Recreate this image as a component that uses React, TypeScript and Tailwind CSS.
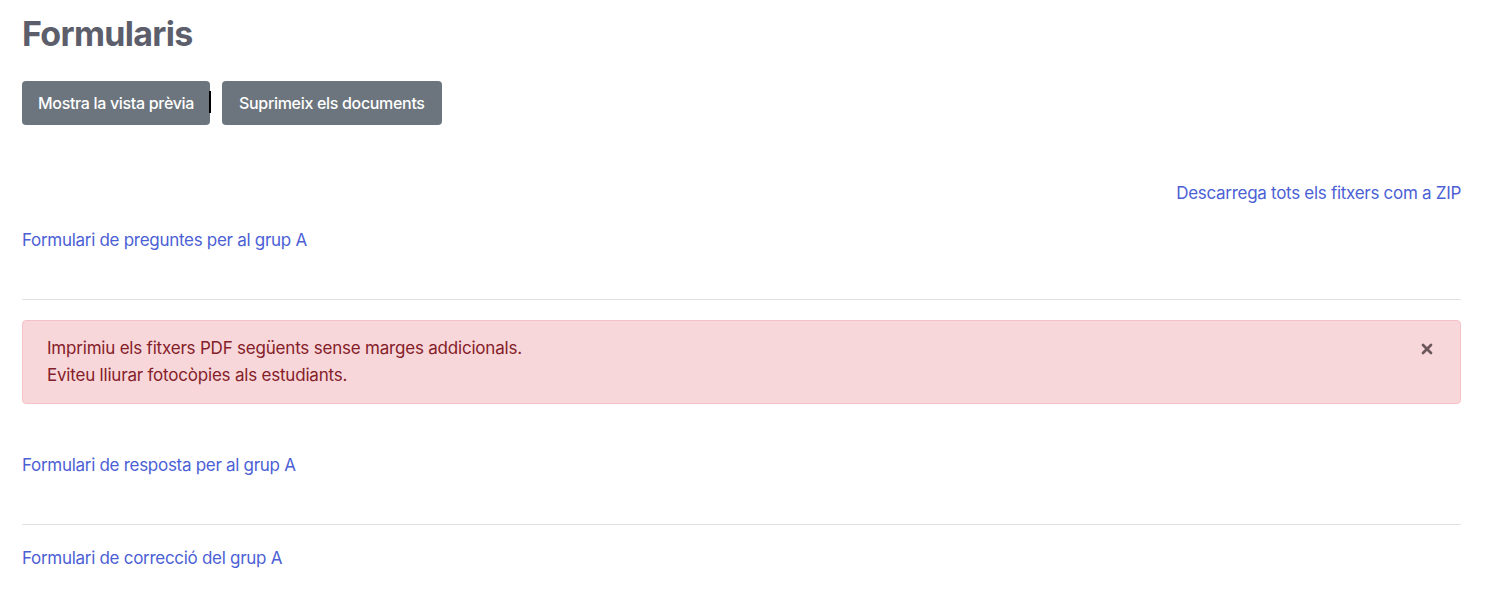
import { X } from "lucide-react";

const link = "text-[#4c5fd5] text-[17px] leading-6 tracking-[-0.017em] hover:underline";

export default function App() {
  return (
    <div className="min-h-screen bg-white font-['Inter',sans-serif] pl-[22px] pr-[36px]">
      <h1 className="pt-[12px] text-[34px] leading-[44px] font-bold tracking-[-0.02em] text-[#5c5e6c]">Formularis</h1>

      <div className="mt-[25px] flex items-center gap-[12px]">
        <button className="relative h-[44px] rounded-[4px] bg-[#6c757d] px-[16px] text-[16px] font-medium tracking-[-0.02em] text-white">
          Mostra la vista prèvia
          <span className="absolute right-[-1px] top-[10px] h-[22px] w-[2px] bg-black" />
        </button>
        <button className="h-[44px] rounded-[4px] bg-[#6c757d] px-[17px] text-[16px] font-medium tracking-[-0.02em] text-white">
          Suprimeix els documents
        </button>
      </div>

      <div className="mt-[56px] flex justify-end">
        <a href="#" className={link}>Descarrega tots els fitxers com a ZIP</a>
      </div>

      <div className="mt-[23px]">
        <a href="#" className={link}>Formulari de preguntes per al grup A</a>
      </div>
      <hr className="mt-[47px] border-[#e2e2e2]" />

      <div className="mt-[20px] flex items-start justify-between rounded-[4px] border border-[#f5c2c7] bg-[#f8d7da] py-[14px] pl-[24px] pr-[25px] text-[#842029]">
        <div className="text-[17px] leading-[27px] tracking-[-0.012em]">
          <p>Imprimiu els fitxers PDF següents sense marges addicionals.</p>
          <p>Eviteu lliurar fotocòpies als estudiants.</p>
        </div>
        <button className="mt-[6px] text-[#6b585c]">
          <X size={16} strokeWidth={4} />
        </button>
      </div>

      <div className="mt-[49px]">
        <a href="#" className={link}>Formulari de resposta per al grup A</a>
      </div>
      <hr className="mt-[47px] border-[#e2e2e2]" />

      <div className="mt-[21px]">
        <a href="#" className={link}>Formulari de correcció del grup A</a>
      </div>
    </div>
  );
}
